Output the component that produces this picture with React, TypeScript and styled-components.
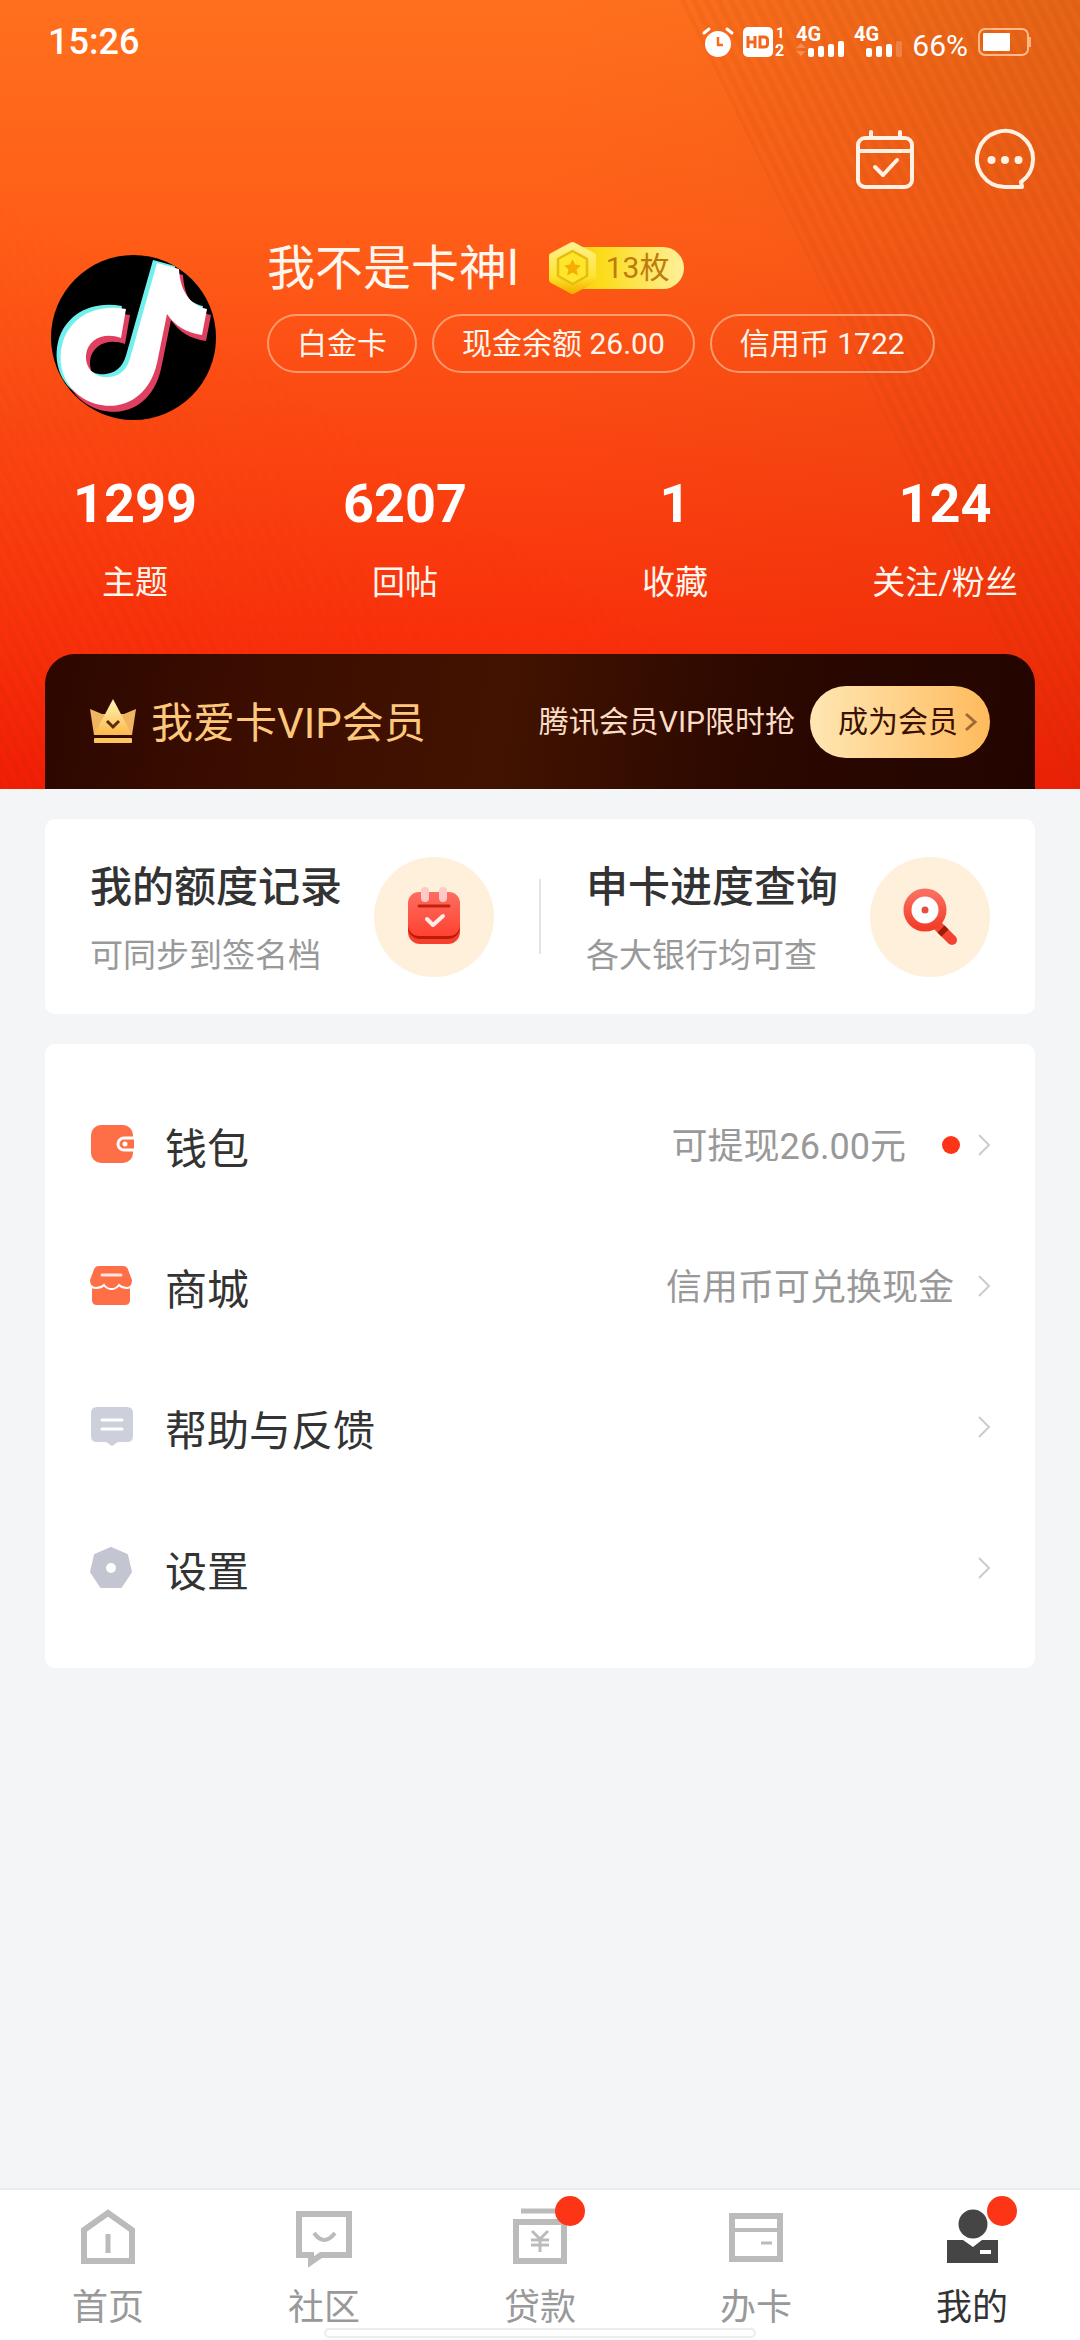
import React from "react";
import styled, { createGlobalStyle } from "styled-components";

const GlobalStyle = createGlobalStyle`
  *, *::before, *::after { box-sizing: border-box; }
  body {
    margin: 0;
    background: #f4f5f7;
    font-family: Roboto, "Noto Sans CJK SC", sans-serif;
    color: #333;
  }
  a { color: inherit; text-decoration: none; }
  button { font: inherit; color: inherit; border: 0; padding: 0; background: none; cursor: pointer; }
  svg { display: block; flex: none; overflow: visible; }
`;

const Page = styled.div`
  min-height: 100vh;
  display: flex;
  flex-direction: column;
`;

/* ---------- hero ---------- */

const Hero = styled.header`
  position: relative;
  isolation: isolate;
  overflow: hidden;
  display: flex;
  flex-direction: column;
  color: #fff6ee;
  background:
    linear-gradient(90deg, transparent 50%, rgba(150, 60, 0, 0.1) 100%),
    radial-gradient(circle at 100% 0, rgba(130, 70, 0, 0.14) 0, transparent 30%),
    linear-gradient(180deg, #ff701d 0%, #ff5d18 30%, #fb4812 53%, #f92f0b 82%, #f21d05 100%);

  &::before,
  &::after {
    content: "";
    position: absolute;
    inset: 0;
    z-index: -1;
    background: repeating-linear-gradient(64deg, rgba(150, 50, 0, 0.08) 0 3px, transparent 6px 8px, rgba(150, 50, 0, 0.08) 11px);
  }
  &::before {
    clip-path: polygon(63% 0, 100% 0, 100% 100%, 99% 100%);
  }
  &::after {
    mask-image: linear-gradient(34deg, #000 0%, transparent 40%);
  }
`;

const StatusBar = styled.div`
  height: 84px;
  padding: 0 48px 0 48px;
  display: flex;
  align-items: center;
  justify-content: space-between;
  color: #fff;
`;

const Clock = styled.time`
  font-size: 36px;
  line-height: 48px;
  font-weight: 500;
`;

const StatusIcons = styled.div`
  display: flex;
  align-items: center;
  gap: 10px;
`;

const BatteryText = styled.span`
  font-size: 30px;
  line-height: 36px;
  padding-top: 8px;
`;

const Actions = styled.nav`
  display: flex;
  justify-content: flex-end;
  gap: 60px;
  padding: 45px 45px 0;
`;

const Profile = styled.section`
  display: flex;
  align-items: flex-start;
  gap: 51px;
  padding: 48px 51px 0;
`;

const AvatarLink = styled.a`
  margin-top: 18px;
  border-radius: 50%;
  overflow: hidden;
`;

const Info = styled.div`
  display: flex;
  flex-direction: column;
  gap: 15px;
`;

const NameRow = styled.div`
  display: flex;
  align-items: center;
  gap: 30px;
`;

const Name = styled.h1`
  margin: 0;
  padding-top: 2px;
  font-size: 48px;
  line-height: 60px;
  font-weight: 400;
`;

const Medal = styled.button`
  display: flex;
  align-items: center;
  gap: 10px;
  height: 42px;
  padding-right: 15px;
  border-radius: 21px;
  background: linear-gradient(90deg, #f7c80a 0%, #fbdc1c 40%, #fff09a 100%);
  font-size: 30px;
  line-height: 42px;
  color: #c07a0c;
`;

const Pills = styled.div`
  display: flex;
  gap: 15px;
`;

const Pill = styled.button`
  height: 59px;
  padding: 0 28px;
  border: 2px solid rgba(255, 230, 200, 0.5);
  border-radius: 30px;
  font-size: 30px;
  line-height: 54px;
  white-space: nowrap;
`;

const Stats = styled.nav`
  margin-top: 52px;
  display: grid;
  grid-template-columns: repeat(4, 1fr);
`;

const Stat = styled.a`
  display: flex;
  flex-direction: column;
  align-items: center;
  gap: 23px;
`;

const StatValue = styled.strong`
  font-size: 54px;
  line-height: 64px;
  font-weight: 700;
  color: #fff;
`;

const StatLabel = styled.span`
  font-size: 33px;
  line-height: 48px;
`;

const Vip = styled.section`
  margin: 47px 45px 0;
  height: 135px;
  padding: 0 45px;
  display: flex;
  align-items: center;
  border-radius: 30px 30px 0 0;
  background: linear-gradient(100deg, #2c0700 0%, #3b0d00 20%, #421300 46%, #2b0800 72%, #230500 100%);
`;

const VipTitle = styled.h2`
  margin: 0 auto 0 15px;
  padding-top: 4px;
  font-size: 42px;
  line-height: 60px;
  font-weight: 400;
  color: #fdc77c;
`;

const VipHint = styled.span`
  margin-right: 15px;
  font-size: 30px;
  line-height: 48px;
  color: #fbdcc4;
`;

const VipButton = styled.button`
  height: 72px;
  padding: 0 14px 0 28px;
  display: flex;
  align-items: center;
  gap: 7px;
  border-radius: 36px;
  background: linear-gradient(90deg, #ffe6b3 0%, #ffd28a 50%, #ffba5c 100%);
  font-size: 30px;
  line-height: 48px;
  color: #3a1100;
`;

/* ---------- cards ---------- */

const Main = styled.main`
  flex: 1;
  display: flex;
  flex-direction: column;
  gap: 30px;
  padding: 30px 45px;
`;

const Card = styled.section`
  border-radius: 10px;
  background: #fff;
`;

const Shortcuts = styled(Card)`
  display: grid;
  grid-template-columns: 1fr 2px 1fr;
  align-items: center;
  height: 195px;
`;

const Divider = styled.span`
  height: 75px;
  background: #e4e4e6;
`;

const Shortcut = styled.a`
  display: flex;
  align-items: center;
  justify-content: space-between;
  padding: 0 45px;
`;

const ShortcutText = styled.span`
  display: flex;
  flex-direction: column;
  gap: 8px;
  padding-top: 10px;
`;

const ShortcutTitle = styled.strong`
  font-size: 42px;
  line-height: 60px;
  font-weight: 500;
`;

const ShortcutSub = styled.span`
  font-size: 33px;
  line-height: 60px;
  color: #999;
`;

const Disc = styled.span`
  width: 120px;
  height: 120px;
  display: flex;
  align-items: center;
  justify-content: center;
  border-radius: 50%;
  background: #fef0db;
`;

const Menu = styled(Card)`
  padding: 30px 45px;
`;

const MenuRow = styled.a`
  height: 141px;
  display: flex;
  align-items: center;
`;

const MenuLabel = styled.span`
  margin: 0 auto 0 31px;
  font-size: 42px;
  line-height: 60px;
  padding-top: 10px;
`;

const MenuNote = styled.span`
  margin-right: 24px;
  font-size: 36px;
  line-height: 60px;
  padding-top: 4px;
  color: #999;
`;

const Dot = styled.i`
  width: 18px;
  height: 18px;
  margin: 0 18px 0 12px;
  border-radius: 50%;
  background: #fd3517;
`;

/* ---------- tab bar ---------- */

const TabBar = styled.nav`
  position: sticky;
  bottom: 0;
  display: grid;
  grid-template-columns: repeat(5, 1fr);
  padding: 18px 0 8px;
  border-top: 2px solid #e9ebee;
  background: #fff;
`;

const Tab = styled.a<{ $active?: boolean }>`
  position: relative;
  display: flex;
  flex-direction: column;
  align-items: center;
  gap: 18px;
  font-size: 36px;
  line-height: 48px;
  color: ${(p) => (p.$active ? "#333" : "#999")};
`;

const TabBadge = styled.i`
  position: absolute;
  top: -12px;
  left: calc(50% + 15px);
  width: 30px;
  height: 30px;
  border-radius: 50%;
  background: #fd3517;
`;

const HomeIndicator = styled.span`
  position: absolute;
  left: 30%;
  right: 30%;
  bottom: 2px;
  height: 10px;
  border: 2px solid #ececec;
  border-radius: 5px;
  background: #fff;
`;

/* ---------- icons ---------- */

const AlarmIcon = () => (
  <svg width="30" height="30" viewBox="0 0 30 30" aria-hidden="true">
    <circle cx="15" cy="17" r="13" fill="#fff" />
    <path d="M1 6 L6 2 M29 6 L24 2" stroke="#fff" strokeWidth="3" strokeLinecap="round" />
    <path d="M15 10 V18 H20" fill="none" stroke="#fb6a1d" strokeWidth="2.5" />
  </svg>
);

const HdIcon = () => (
  <svg width="43" height="32" viewBox="0 0 43 32" aria-hidden="true">
    <rect x="0" y="1" width="30" height="30" rx="5" fill="#fff" />
    <path d="M5 10 V22 M12 10 V22 M5 16 H12 M17 11 H21 Q24.500 11 24.500 14 V18 Q24.500 21 21 21 H17 Z" fill="none" stroke="#f4661c" strokeWidth="3" />
    <text x="33" y="12" fontSize="15" fontWeight="700" fill="#fff">1</text>
    <text x="32" y="30" fontSize="16" fontWeight="700" fill="#fff">2</text>
  </svg>
);

const SignalIcon = ({ bars, data }: { bars: number; data?: boolean }) => (
  <svg width="48" height="32" viewBox="0 0 48 32" aria-hidden="true">
    <text x="0" y="15" fontSize="20" fontWeight="700" fill="#fff">4G</text>
    {data && <path d="M0 22 L5 17 L10 22 Z M0 25 L5 30 L10 25 Z" fill="#fff" opacity="0.25" />}
    {[0, 1, 2, 3].map((i) => (
      <rect key={i} x={12 + i * 10} y={22 - i * 2 - (i === 3 ? 1 : 0)} width="6" height={9 + i * 2 + (i === 3 ? 1 : 0)} rx="2" fill="#fff" opacity={i < bars ? 1 : 0.2} />
    ))}
  </svg>
);

const BatteryIcon = () => (
  <svg width="54" height="28" viewBox="0 0 54 28" aria-hidden="true">
    <rect x="1" y="1" width="49" height="26" rx="6" fill="none" stroke="#ffb98a" strokeWidth="2" />
    <rect x="5" y="5" width="27" height="18" rx="1" fill="#fff" />
    <rect x="51" y="9" width="2" height="10" fill="#ffb079" />
  </svg>
);

const CheckInIcon = () => (
  <svg width="60" height="60" viewBox="0 0 60 60" fill="none" stroke="#fff1e4" strokeWidth="4" strokeLinecap="round" strokeLinejoin="round" aria-hidden="true">
    <rect x="3" y="9" width="54" height="49" rx="7" />
    <path d="M3 22 H57 M16 3 V8 M45 3 V8 M20 38 L28 46 L42 31" />
  </svg>
);

const ChatIcon = () => (
  <svg width="60" height="60" viewBox="0 0 60 60" fill="none" stroke="#fff1e4" strokeWidth="4" strokeLinejoin="round" aria-hidden="true">
    <path d="M46 53 A28 28 0 1 0 30 58 H47 Z" />
    <g fill="#fff1e4" stroke="none">
      <circle cx="16.500" cy="31" r="4" />
      <circle cx="30" cy="31" r="4" />
      <circle cx="43.500" cy="31" r="4" />
    </g>
  </svg>
);

const NOTE =
  "M106 8 L128 14 C129 36 139 50 156 54 L151 80 C136 78 124 71 116 59 L106 108 C98 143 71 156 45 149 C18 141 5 116 11 90 C18 62 45 48 75 54 L70 83 C53 77 37 84 35 100 C34 115 46 124 59 122 C72 120 77 112 80 100 Z";

const Avatar = () => (
  <svg width="165" height="165" viewBox="0 0 165 165" role="img" aria-label="头像">
    <rect width="165" height="165" fill="#000" />
    <path d={NOTE} fill="#6ff0ec" transform="translate(-4 -3)" />
    <path d={NOTE} fill="#e0405f" transform="translate(4 6)" />
    <path d={NOTE} fill="#fff" />
  </svg>
);

const MedalIcon = () => (
  <svg width="47" height="52" viewBox="0 0 47 52" strokeLinejoin="round" aria-hidden="true">
    <defs>
      <linearGradient id="medal" x1="0" y1="0" x2="0" y2="1">
        <stop offset="0" stopColor="#fff08a" />
        <stop offset="0.7" stopColor="#fde32e" />
        <stop offset="1" stopColor="#f5b400" />
      </linearGradient>
    </defs>
    <path d="M23.500 3 L44 14 V38 L23.500 49 L3 38 V14 Z" fill="url(#medal)" stroke="url(#medal)" strokeWidth="6" />
    <path d="M23.500 9 L38 17 V34 L23.500 42 L9 34 V17 Z" fill="#ffe52c" stroke="#e3bd10" strokeWidth="2.500" />
    <path d="M23.500 17 L26 22.500 L32 23.500 L27.500 27.500 L29 33.500 L23.500 30.500 L18 33.500 L19.500 27.500 L15 23.500 L21 22.500 Z" fill="#f5ad05" />
  </svg>
);

const CrownIcon = () => (
  <svg width="46" height="46" viewBox="0 0 46 46" aria-hidden="true">
    <defs>
      <linearGradient id="crown" x1="0" y1="0" x2="0" y2="1">
        <stop offset="0" stopColor="#fff6b8" />
        <stop offset="1" stopColor="#fdb84a" />
      </linearGradient>
    </defs>
    <path d="M0 10 L12 15 H34 L46 10 L42 36 H4 Z" fill="#f0b561" />
    <path d="M23 0 L42 36 H4 Z" fill="url(#crown)" />
    <rect x="4" y="39" width="38" height="5" rx="1" fill="#fdc55e" />
    <path d="M17 22 L23 28 L29 22" fill="none" stroke="#5b2b05" strokeWidth="3" />
  </svg>
);

const Chevron = ({ color = "#ccc", width = 12, height = 22, stroke = 2 }: { color?: string; width?: number; height?: number; stroke?: number }) => (
  <svg width={width} height={height} viewBox={`0 0 ${width} ${height}`} fill="none" stroke={color} strokeWidth={stroke} aria-hidden="true">
    <path d={`M1 1 L${width - 1} ${height / 2} L1 ${height - 1}`} />
  </svg>
);

const LimitIcon = () => (
  <svg width="54" height="60" viewBox="0 0 54 60" aria-hidden="true">
    <defs>
      <linearGradient id="limit" x1="0" y1="0" x2="0" y2="1">
        <stop offset="0" stopColor="#fd6e60" />
        <stop offset="1" stopColor="#ff4231" />
      </linearGradient>
    </defs>
    <rect x="1" y="14" width="52" height="43" rx="12" fill="#f4412f" />
    <rect x="1" y="11" width="52" height="41" rx="12" fill="#bf1a05" />
    <rect x="1" y="5" width="52" height="44" rx="11" fill="url(#limit)" />
    <rect x="14" y="0" width="8" height="15" rx="4" fill="#ffc9c4" />
    <rect x="32" y="0" width="8" height="15" rx="4" fill="#ffc9c4" />
    <path d="M12 19 H42" stroke="#c5200e" strokeWidth="3" strokeLinecap="round" />
    <path d="M20 32 L26 38 L36 29" fill="none" stroke="#ffeceb" strokeWidth="4" strokeLinecap="round" strokeLinejoin="round" />
  </svg>
);

const ProgressIcon = () => (
  <svg width="56" height="60" viewBox="0 0 56 60" aria-hidden="true">
    <defs>
      <linearGradient id="lens" x1="0" y1="0" x2="0" y2="1">
        <stop offset="0" stopColor="#fb6e60" />
        <stop offset="1" stopColor="#f23d29" />
      </linearGradient>
    </defs>
    <path d="M36 39 L50 53" stroke="#f24430" strokeWidth="10" strokeLinecap="round" />
    <path d="M39 42 L43 46" stroke="#a01c08" strokeWidth="10" />
    <circle cx="23" cy="23" r="17.500" fill="#fff" stroke="url(#lens)" strokeWidth="8" />
    <circle cx="23" cy="23" r="3.500" fill="#e4503f" />
  </svg>
);

const WalletIcon = () => (
  <svg width="44" height="44" viewBox="0 0 44 44" aria-hidden="true">
    <rect x="1" y="2" width="42" height="38" rx="10" fill="#fe6f47" />
    <path d="M44 15 H34 A6 6 0 0 0 34 27 H44" fill="#fe6f47" stroke="#fff" strokeWidth="3" />
    <circle cx="35" cy="21" r="2.500" fill="#fff" />
  </svg>
);

const ShopIcon = () => (
  <svg width="44" height="44" viewBox="0 0 44 44" aria-hidden="true">
    <path d="M2 22 H40 V36 Q40 41 35 41 H7 Q2 41 2 36 Z" fill="#fe6f47" />
    <path d="M9 1 H33 Q37 1 38.500 4 L43 16 Q43 24 37 24 Q32 24 29 21 Q26 25 21.500 25 Q17 25 14 21 Q11 24 6 24 Q-1 24 -1 16 L3.500 4 Q5 1 9 1 Z" fill="#fe6f47" stroke="#fff" strokeWidth="2" />
    <path d="M12 11 H31" stroke="#ffe6dd" strokeWidth="3" strokeLinecap="round" />
  </svg>
);

const FeedbackIcon = () => (
  <svg width="44" height="44" viewBox="0 0 44 44" aria-hidden="true">
    <path d="M7 2 H37 Q43 2 43 8 V31 Q43 37 37 37 H28 L22 41 L16 37 H7 Q1 37 1 31 V8 Q1 2 7 2 Z" fill="#cdd0dc" />
    <path d="M12 15 H32 M12 24 H32" stroke="#fff" strokeWidth="3" strokeLinecap="round" />
  </svg>
);

const SettingsIcon = () => (
  <svg width="44" height="44" viewBox="0 0 44 44" aria-hidden="true">
    <path d="M21 2 L37 9 L41 26 L31 41 H11 L1 26 L5 9 Z" fill="#c3c6d1" stroke="#c3c6d1" strokeWidth="2" strokeLinejoin="round" />
    <circle cx="21" cy="22" r="5" fill="#fff" />
  </svg>
);

const tabSvg = { width: 56, height: 58, viewBox: "0 0 56 58", fill: "none", stroke: "#bbb", strokeWidth: 6, "aria-hidden": true } as const;

const HomeIcon = () => (
  <svg {...tabSvg}>
    <path d="M4 22 L28 5 L52 22 V53 H4 Z" />
    <path d="M28 26 V45" strokeWidth="5" />
  </svg>
);

const CommunityIcon = () => (
  <svg {...tabSvg}>
    <path d="M3 6 H53 V47 H25 L15 54 V47 H3 Z" />
    <path d="M18 25 Q28 39 39 25" strokeWidth="4" />
  </svg>
);

const LoanIcon = () => (
  <svg {...tabSvg}>
    <path d="M9 3 H47" strokeWidth="5" />
    <path d="M4 14 H52 V53 H4 Z" />
    <path d="M20 23 L28 31 L36 23 M28 31 V44 M19 32 H37 M19 37 H37" strokeWidth="3" />
  </svg>
);

const CardIcon = () => (
  <svg {...tabSvg}>
    <path d="M4 8 H52 V51 H4 Z" />
    <path d="M4 22 H52" strokeWidth="4" />
    <path d="M33 35 H44" strokeWidth="3" />
  </svg>
);

const MineIcon = () => (
  <svg {...tabSvg} fill="#454545" stroke="none">
    <circle cx="29" cy="16" r="14.500" />
    <path d="M3 32 H19 L29 39 L38 32 H54 V55 H3 Z" />
    <rect x="36" y="42" width="11" height="4" fill="#fff" />
  </svg>
);

/* ---------- data ---------- */

const pills = ["白金卡", "现金余额 26.00", "信用币 1722"];

const stats = [
  { value: "1299", label: "主题" },
  { value: "6207", label: "回帖" },
  { value: "1", label: "收藏" },
  { value: "124", label: "关注/粉丝" },
];

const menu = [
  { label: "钱包", note: "可提现26.00元", dot: true, Icon: WalletIcon },
  { label: "商城", note: "信用币可兑换现金", Icon: ShopIcon },
  { label: "帮助与反馈", Icon: FeedbackIcon },
  { label: "设置", Icon: SettingsIcon },
];

const tabs = [
  { label: "首页", Icon: HomeIcon },
  { label: "社区", Icon: CommunityIcon },
  { label: "贷款", Icon: LoanIcon, badge: true },
  { label: "办卡", Icon: CardIcon },
  { label: "我的", Icon: MineIcon, badge: true, active: true },
];

export default function App() {
  return (
    <Page>
      <GlobalStyle />
      <Hero>
        <StatusBar>
          <Clock>15:26</Clock>
          <StatusIcons>
            <AlarmIcon />
            <HdIcon />
            <SignalIcon bars={4} data />
            <SignalIcon bars={3} />
            <BatteryText>66%</BatteryText>
            <BatteryIcon />
          </StatusIcons>
        </StatusBar>
        <Actions>
          <button type="button" aria-label="签到"><CheckInIcon /></button>
          <button type="button" aria-label="消息"><ChatIcon /></button>
        </Actions>
        <Profile>
          <AvatarLink href="#profile"><Avatar /></AvatarLink>
          <Info>
            <NameRow>
              <Name>我不是卡神l</Name>
              <Medal type="button"><MedalIcon />13枚</Medal>
            </NameRow>
            <Pills>
              {pills.map((p) => <Pill key={p} type="button">{p}</Pill>)}
            </Pills>
          </Info>
        </Profile>
        <Stats>
          {stats.map((s) => (
            <Stat key={s.label} href="#stats">
              <StatValue>{s.value}</StatValue>
              <StatLabel>{s.label}</StatLabel>
            </Stat>
          ))}
        </Stats>
        <Vip>
          <CrownIcon />
          <VipTitle>我爱卡VIP会员</VipTitle>
          <VipHint>腾讯会员VIP限时抢</VipHint>
          <VipButton type="button">
            成为会员
            <Chevron color="#a06a35" width={11} height={18} stroke={3} />
          </VipButton>
        </Vip>
      </Hero>

      <Main>
        <Shortcuts>
          <Shortcut href="#limits">
            <ShortcutText>
              <ShortcutTitle>我的额度记录</ShortcutTitle>
              <ShortcutSub>可同步到签名档</ShortcutSub>
            </ShortcutText>
            <Disc><LimitIcon /></Disc>
          </Shortcut>
          <Divider />
          <Shortcut href="#progress">
            <ShortcutText>
              <ShortcutTitle>申卡进度查询</ShortcutTitle>
              <ShortcutSub>各大银行均可查</ShortcutSub>
            </ShortcutText>
            <Disc><ProgressIcon /></Disc>
          </Shortcut>
        </Shortcuts>
        <Menu>
          {menu.map(({ label, note, dot, Icon }) => (
            <MenuRow key={label} href="#menu">
              <Icon />
              <MenuLabel>{label}</MenuLabel>
              {note && <MenuNote>{note}</MenuNote>}
              {dot && <Dot />}
              <Chevron />
            </MenuRow>
          ))}
        </Menu>
      </Main>

      <TabBar>
        {tabs.map(({ label, Icon, badge, active }) => (
          <Tab key={label} href="#tab" $active={active} aria-current={active ? "page" : undefined}>
            <Icon />
            {badge && <TabBadge />}
            {label}
          </Tab>
        ))}
        <HomeIndicator />
      </TabBar>
    </Page>
  );
}
